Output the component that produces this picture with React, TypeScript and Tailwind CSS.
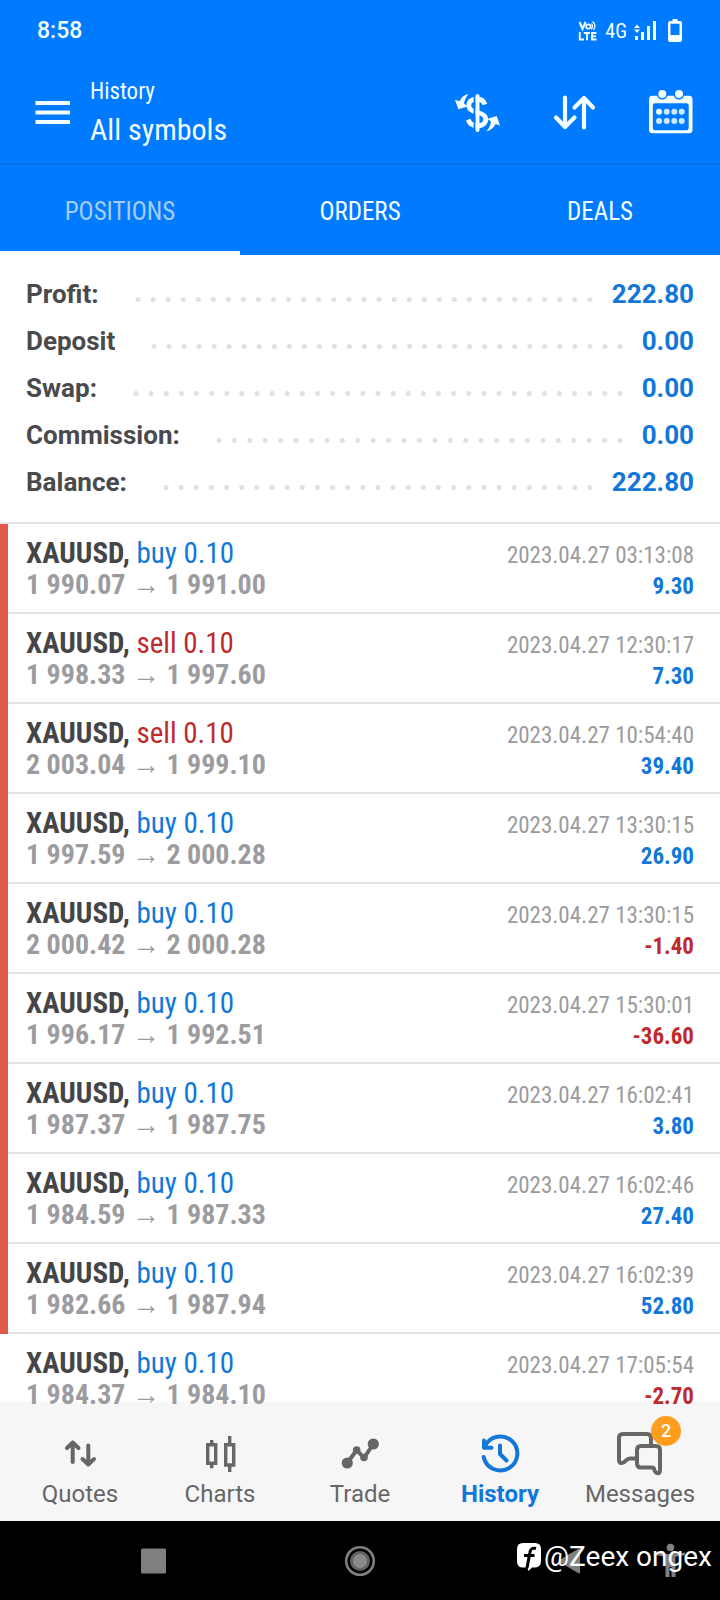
import type { ReactNode } from "react";

type Side = "buy" | "sell";

interface Position {
  side: Side;
  open: string;
  close: string;
  time: string;
  profit: string;
  marked: boolean;
}

const summary = [
  { label: "Profit:", value: "222.80" },
  { label: "Deposit", value: "0.00" },
  { label: "Swap:", value: "0.00" },
  { label: "Commission:", value: "0.00" },
  { label: "Balance:", value: "222.80" },
];

const positions: Position[] = [
  { side: "buy", open: "1 990.07", close: "1 991.00", time: "2023.04.27 03:13:08", profit: "9.30", marked: true },
  { side: "sell", open: "1 998.33", close: "1 997.60", time: "2023.04.27 12:30:17", profit: "7.30", marked: true },
  { side: "sell", open: "2 003.04", close: "1 999.10", time: "2023.04.27 10:54:40", profit: "39.40", marked: true },
  { side: "buy", open: "1 997.59", close: "2 000.28", time: "2023.04.27 13:30:15", profit: "26.90", marked: true },
  { side: "buy", open: "2 000.42", close: "2 000.28", time: "2023.04.27 13:30:15", profit: "-1.40", marked: true },
  { side: "buy", open: "1 996.17", close: "1 992.51", time: "2023.04.27 15:30:01", profit: "-36.60", marked: true },
  { side: "buy", open: "1 987.37", close: "1 987.75", time: "2023.04.27 16:02:41", profit: "3.80", marked: true },
  { side: "buy", open: "1 984.59", close: "1 987.33", time: "2023.04.27 16:02:46", profit: "27.40", marked: true },
  { side: "buy", open: "1 982.66", close: "1 987.94", time: "2023.04.27 16:02:39", profit: "52.80", marked: true },
  { side: "buy", open: "1 984.37", close: "1 984.10", time: "2023.04.27 17:05:54", profit: "-2.70", marked: false },
];

function StatusBar() {
  return (
    <div className="flex h-[61px] items-center justify-between pr-[38px] pl-[37px]">
      <span className="text-[23px] leading-7 font-medium">8:58</span>
      <div className="flex items-center">
        <svg viewBox="0 0 20 22" className="h-[22px] w-5" fill="none" stroke="currentColor" aria-label="VoLTE">
          <path d="M1.5 2 4.5 9 7.5 2" strokeWidth="2" />
          <circle cx="10.3" cy="6.6" r="2.2" strokeWidth="1.6" />
          <path d="M13.5 3.5q2 3-.3 5.8M14.5 1.5q4.400 3.500 1 8.500" strokeWidth="1.3" />
          <path d="M1.800 12v7.500H6M5.800 13H12M9 13v7.200M18.500 13h-4.500v6.500h4.500M14 16.200h4" strokeWidth="1.900" />
        </svg>
        <span className="ml-[7px] font-['Roboto_Condensed','Liberation_Sans_Narrow',sans-serif] text-xl leading-6">4G</span>
        <svg viewBox="0 0 24 24" className="ml-[7px] size-6" fill="currentColor" aria-hidden="true">
          <path d="M1 17h3v4H1zM7 13h3v8H7zM13 7h3v14h-3zM19 2h3v19h-3z" />
          <path d="M3 5.500 6 9H0zM3 14 6 10.500H0z" />
        </svg>
        <svg viewBox="0 0 14 24" className="ml-[10px] h-6 w-[14px]" aria-hidden="true">
          <path d="M4.500 0h5v2H12q2 0 2 2v17q0 2-2 2H2q-2 0-2-2V4q0-2 2-2h2.500zM2.500 4.800V16h9V4.800z" fill="currentColor" fillRule="evenodd" />
        </svg>
      </div>
    </div>
  );
}

function Header() {
  return (
    <div className="flex h-[104px] items-center border-b-2 border-[#0a6fe8] pr-[26px] pl-7 font-['Roboto_Condensed','Liberation_Sans_Narrow',sans-serif]">
      <button type="button" aria-label="Menu" className="size-12">
        <svg viewBox="0 0 48 48" className="size-12" fill="currentColor">
          <path d="M7.500 13H42v4H7.500zM7.500 22.500H42v4H7.500zM7.500 32H42v4H7.500z" />
        </svg>
      </button>
      <div className="ml-[14px] flex-1">
        <p className="text-[23px] leading-9">History</p>
        <h1 className="text-[30px] leading-10">All symbols</h1>
      </div>
      <div className="flex gap-12">
        <button type="button" aria-label="Choose symbol" className="size-12">
          <svg viewBox="0 0 48 48" className="size-12" fill="none">
            <path d="M31 16.500C29.500 12.300 26.500 11 23 11c-5 0-8.200 2.500-8.200 6.500 0 4.200 3.200 5.800 8.700 7s8.300 3 8.300 6.800c0 4-3.300 6.500-8.300 6.500-4.500 0-8-2-9.300-6.300" stroke="currentColor" strokeWidth="4.800" />
            <path d="M20.600 6v38" stroke="#007aff" strokeWidth="2" />
            <path d="M23.500 8v34" stroke="currentColor" strokeWidth="4" strokeLinecap="round" />
            <g fill="currentColor">
              <path d="M14.500 6C10 7 7 9.500 5.500 13.200L1 11.800 4.300 21.300 13.500 18.500 10 15.500C10.500 12 12 9 14.500 6Z" />
              <path d="M32.500 43.200C37 42.200 40 39.700 41.500 36L46 37.400 42.700 27.900 33.500 30.700 37 33.700C36.500 37.200 35 40.200 32.500 43.200Z" />
            </g>
          </svg>
        </button>
        <button type="button" aria-label="Sort" className="size-12">
          <svg viewBox="0 0 48 48" className="size-12" fill="none" stroke="currentColor" strokeWidth="4.200" strokeLinecap="round" strokeLinejoin="round">
            <path d="M15 9.500V39M6 29.500 15 39l9.500-9.500M34 39.500V10M24.500 19.500 34 10l9 9.500" />
          </svg>
        </button>
        <button type="button" aria-label="Select period" className="size-12">
          <svg viewBox="0 0 48 48" className="size-12">
            <path d="M6 7.700h37q3.500 0 3.500 3.500v30.600q0 3.500-3.500 3.500H6.500Q3 45.300 3 41.800V11.200Q3 7.700 6 7.700ZM9 15.300q-2.200 0-2.200 2.200V40q0 2.200 2.200 2.200h31.500q2.200 0 2.200-2.200V17.500q0-2.200-2.200-2.200Z" fill="currentColor" fillRule="evenodd" />
            <g fill="#007aff">
              <circle cx="16.300" cy="6" r="5.500" />
              <circle cx="33" cy="6" r="5.500" />
            </g>
            <g fill="currentColor">
              <circle cx="16.300" cy="6" r="4" />
              <circle cx="33" cy="6" r="4" />
              <circle cx="13" cy="23.700" r="3" />
            </g>
            <g fill="#cdeaff">
              <circle cx="20.700" cy="23.700" r="3" />
              <circle cx="28.300" cy="23.700" r="3" />
              <circle cx="35.700" cy="23.700" r="3" />
              <circle cx="13" cy="33" r="3" />
              <circle cx="20.700" cy="33" r="3" />
              <circle cx="28.300" cy="33" r="3" />
              <circle cx="35.700" cy="33" r="3" />
            </g>
          </svg>
        </button>
      </div>
    </div>
  );
}

function Tabs() {
  return (
    <div role="tablist" className="grid h-[90px] grid-cols-3 font-['Roboto_Condensed','Liberation_Sans_Narrow',sans-serif] text-[25px]">
      <button type="button" role="tab" aria-selected="true" className="border-b-4 border-white pt-2 text-[#a6cdf8]">
        POSITIONS
      </button>
      <button type="button" role="tab" aria-selected="false" className="border-b-4 border-transparent pt-2">
        ORDERS
      </button>
      <button type="button" role="tab" aria-selected="false" className="border-b-4 border-transparent pt-2">
        DEALS
      </button>
    </div>
  );
}

function Summary() {
  return (
    <dl className="border-b-2 border-[#e3e3e3] bg-white px-[26px] py-4 text-[26px] leading-[47px] font-bold">
      {summary.map((row) => (
        <div key={row.label} className="flex items-center">
          <dt className="text-[#4a4a4d]">{row.label}</dt>
          <dd aria-hidden="true" className="mt-[10px] mr-[10px] ml-9 h-[5px] flex-1 bg-[radial-gradient(circle_at_3px_50%,#e0e0e0_2px,transparent_3px)] bg-[length:15px_5px] [background-repeat:space_no-repeat]" />
          <dd className="text-[#1277d8]">{row.value}</dd>
        </div>
      ))}
    </dl>
  );
}

function PositionRow({ item }: { item: Position }) {
  return (
    <li className="flex">
      <span className={item.marked ? "w-2 bg-[#df5a4b]" : "w-2"} />
      <div className="flex-1 border-b-2 border-[#e3e3e3] pt-[13px] pr-[26px] pb-[11px] pl-[18px]">
        <div className="flex h-8 items-baseline justify-between">
          <span className="text-[29px] leading-8">
            <b className="text-[#454548]">XAUUSD,</b>{" "}
            <span className={item.side === "buy" ? "text-[#1277d8]" : "text-[#bf2a2c]"}>{item.side} 0.10</span>
          </span>
          <time className="text-[23px] leading-7 text-[#9b9b9e]">{item.time}</time>
        </div>
        <div className="flex h-8 items-baseline justify-between font-bold">
          <span className="text-[28px] leading-8 text-[#9c9ca0]">
            {item.open} <span className="font-['Liberation_Sans',sans-serif] leading-none font-normal">→</span> {item.close}
          </span>
          <span className={item.profit.startsWith("-") ? "text-[23px] leading-7 text-[#bf2a2c]" : "text-[23px] leading-7 text-[#1277d8]"}>
            {item.profit}
          </span>
        </div>
      </div>
    </li>
  );
}

function NavItem({ label, active, badge, children }: { label: string; active?: boolean; badge?: string; children: ReactNode }) {
  return (
    <a
      href={"#" + label.toLowerCase()}
      aria-current={active ? "page" : undefined}
      className={active ? "flex flex-col items-center gap-[3px] font-bold text-[#1277d8]" : "flex flex-col items-center gap-[3px] text-[#666666]"}
    >
      <span className="relative">
        <svg viewBox="0 0 48 48" className="size-12" fill="none" stroke="currentColor" strokeWidth="4" strokeLinecap="round" strokeLinejoin="round" aria-hidden="true">
          {children}
        </svg>
        {badge && (
          <span className="absolute -top-[13px] -right-[17px] flex size-[30px] items-center justify-center rounded-full bg-[#ff9d1e] text-lg font-medium text-white">
            {badge}
          </span>
        )}
      </span>
      <span className="text-2xl leading-7">{label}</span>
    </a>
  );
}

function BottomNav() {
  return (
    <nav className="grid h-[116px] shrink-0 grid-cols-5 bg-[#f6f6f6] px-[10px] pt-6">
      <NavItem label="Quotes">
        <path d="M16.700 33V13.500M11 19l5.700-5.500 5.800 5.500M32.300 16.500V35M26.500 30l5.800 5.500L38 30" />
      </NavItem>
      <NavItem label="Charts">
        <g strokeWidth="3.400" strokeLinecap="butt" strokeLinejoin="miter">
          <path d="M11.700 15.700h8v18.600h-8zM29.700 15.700h8v20.300h-8zM15.700 11v4M15.700 35v4.300M33.700 7v8M33.700 37v6" />
        </g>
      </NavItem>
      <NavItem label="Trade">
        <path d="M11.300 34 20.700 21 28 29 37.300 15" />
        <g fill="currentColor" stroke="none">
          <circle cx="11.300" cy="34" r="5.600" />
          <circle cx="20.700" cy="21" r="3.800" />
          <circle cx="28" cy="28.500" r="3.800" />
          <circle cx="37.300" cy="15" r="5.600" />
        </g>
      </NavItem>
      <NavItem label="History" active>
        <path d="M9 17.100A17 17 0 1 1 7.700 28M8 11.500v7.300h7.500M24 16.500V25l6.500 6.500" />
      </NavItem>
      <NavItem label="Messages" badge="2">
        <path d="M20 29.500h-6q-2 0-4 2l-2 1.700Q3 35.500 3 31V9q0-4 4-4h24q4 0 4 4v7" />
        <path d="M25 17h15q4 0 4 4v20q0 5-4 2.500-1.500-1-1.700-3-.4-2-2.300-2H25q-4 0-4-4V21q0-4 4-4Z" />
      </NavItem>
    </nav>
  );
}

function SystemNav() {
  return (
    <div className="relative h-[79px] shrink-0 bg-black text-[#7f7f7f]">
      <div className="grid h-full grid-cols-3 items-center justify-items-center px-[50px]">
        <button type="button" aria-label="Recent apps">
          <svg viewBox="0 0 32 32" className="size-8" fill="currentColor">
            <rect x="4" y="3.500" width="25" height="25" rx="1.500" />
          </svg>
        </button>
        <button type="button" aria-label="Home">
          <svg viewBox="0 0 32 32" className="size-8">
            <circle cx="16" cy="16" r="13.800" fill="none" stroke="currentColor" strokeWidth="2.600" />
            <circle cx="16" cy="16" r="10" fill="#626262" />
            <circle cx="16" cy="16" r="7" fill="#8a8a8a" />
          </svg>
        </button>
        <button type="button" aria-label="Back">
          <svg viewBox="0 0 32 32" className="size-8" fill="currentColor">
            <path d="M29 4.500v23q0 1.500-2 .6L8.500 17q-1.500-1 0-2L27 3.900q2-.9 2 .6Z" />
          </svg>
        </button>
      </div>
      <div className="absolute top-[22px] right-8 flex">
        <svg viewBox="0 0 32 36" className="h-9 w-8" fill="currentColor" aria-label="Accessibility">
          <circle cx="14.500" cy="4.500" r="3.800" />
          <path d="M.5 9.500q14 3 28.500 0v2.700l-9.500 1.500V34h-4V24h-2v10h-4V13.700L.5 12.200Z" />
        </svg>
      </div>
      <div className="absolute top-5 right-2 flex items-center gap-[2px] text-white">
        <svg viewBox="0 0 26 28" className="h-7 w-[26px]" aria-label="Facebook">
          <path d="M7 0h12q6 0 6 6v12q0 6-6 6.500h-3L12.500 28l-1-3.500H7q-6 0-6-6V6q0-6 6-6Z" fill="currentColor" />
          <path d="M20 5.500Q14.500 4 13.800 10L11 25M8 12.500h10.500" stroke="#000" strokeWidth="3" fill="none" />
        </svg>
        <span className="text-[28px] leading-8">@Zeex ongex</span>
      </div>
    </div>
  );
}

export default function App() {
  return (
    <div className="flex h-screen flex-col bg-white font-['Roboto',sans-serif]">
      <header className="shrink-0 bg-[#007aff] text-[#f3feff]">
        <StatusBar />
        <Header />
        <Tabs />
      </header>
      <main className="min-h-0 flex-1 overflow-hidden bg-[linear-gradient(to_top,#f6f6f6_2px,#ffffff_5px)]">
        <Summary />
        <ul className="font-['Roboto_Condensed','Liberation_Sans_Narrow',sans-serif]">
          {positions.map((item) => (
            <PositionRow key={item.open} item={item} />
          ))}
        </ul>
      </main>
      <BottomNav />
      <SystemNav />
    </div>
  );
}
